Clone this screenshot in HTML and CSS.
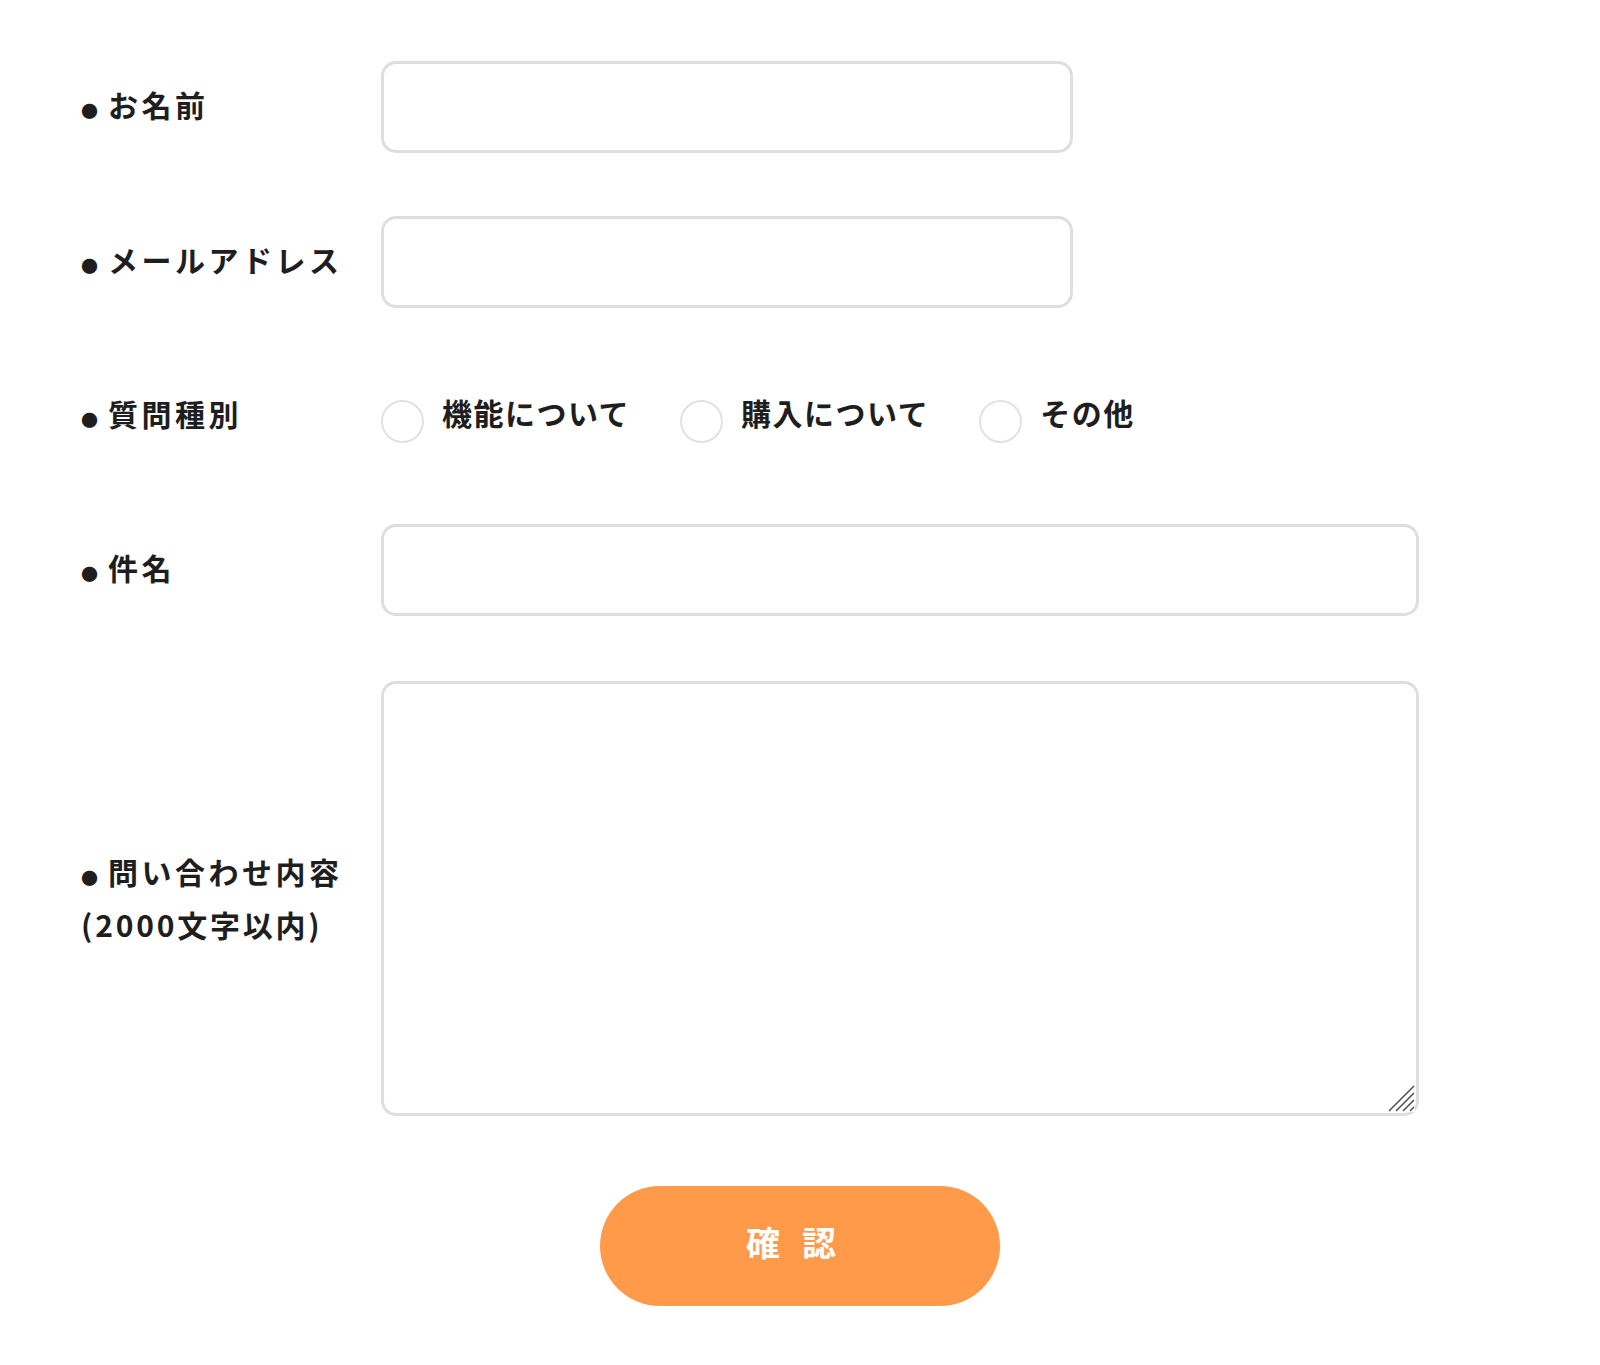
FILE: index.html
```html
<!DOCTYPE html>
<html lang="ja">

<head>
    <meta charset="UTF-8">
    <meta name="viewport" content="width=device-width, initial-scale=1.0">
    <title>お問い合わせ</title>
    <link rel="stylesheet" href="styles.css">
</head>

<body>
    <form class="contact-form">
        <div class="form-grid">
            <label class="form-label" for="name"><span class="mark">●</span>お名前</label>
            <input type="text" id="name" class="form-input short">

            <label class="form-label" for="email"><span class="mark">●</span>メールアドレス</label>
            <input type="email" id="email" class="form-input short">

            <div class="form-label"><span class="mark">●</span>質問種別</div>
            <div class="radio-group">
                <label class="radio-item"><input type="radio" name="kind" value="feature"><span>機能について</span></label>
                <label class="radio-item"><input type="radio" name="kind" value="purchase"><span>購入について</span></label>
                <label class="radio-item"><input type="radio" name="kind" value="other"><span>その他</span></label>
            </div>

            <label class="form-label" for="subject"><span class="mark">●</span>件名</label>
            <input type="text" id="subject" class="form-input">

            <label class="form-label multi" for="message">
                <span class="line"><span class="mark">●</span>問い合わせ内容</span>
                <span class="line note">(2000文字以内)</span>
            </label>
            <div class="textarea-wrap">
                <textarea id="message" class="form-textarea"></textarea>
                <svg class="grip" width="28" height="28" viewBox="0 0 28 28">
                    <path d="M27 2 L2 27 M27 9 L9 27 M27 16 L16 27 M27 23 L23 27" stroke="#555" stroke-width="1.6" fill="none" />
                </svg>
            </div>
        </div>
        <div class="form-submit">
            <button type="button" class="submit-button">確認</button>
        </div>
    </form>
</body>

</html>
```

FILE: styles.css
```css
* {
    margin: 0;
    padding: 0;
    box-sizing: border-box;
}

body {
    font-family: "Noto Sans CJK JP", "Noto Sans", sans-serif;
    background-color: #fff;
    color: #1e1e1e;
}

.contact-form {
    padding: 61px 0 59px;
}

.form-grid {
    display: grid;
    grid-template-columns: 300px 1038px;
    row-gap: 63px;
    padding-left: 81px;
}

.form-label {
    display: flex;
    align-items: center;
    font-size: 30px;
    font-weight: 700;
    letter-spacing: 3.5px;
    line-height: 54px;
    padding-bottom: 6px;
}

.form-label.multi {
    flex-direction: column;
    align-items: flex-start;
    justify-content: center;
    padding-bottom: 0;
}

.form-label .line {
    display: flex;
    align-items: center;
    height: 53px;
}

.form-label .note {
    letter-spacing: 2.8px;
}

.mark {
    font-size: 17px;
    line-height: 1;
    letter-spacing: 0;
    margin-right: 10px;
    margin-top: 12px;
}

.form-input {
    width: 100%;
    height: 92px;
    border: 3px solid #dedede;
    border-radius: 15px;
    font-size: 24px;
    padding: 0 20px;
    outline: none;
}

.form-input.short {
    width: 692px;
}

.radio-group {
    display: flex;
    align-items: center;
    gap: 50px;
    height: 90px;
}

.radio-item {
    display: flex;
    align-items: center;
    gap: 18px;
    font-size: 30px;
    font-weight: 700;
    letter-spacing: 1.5px;
    cursor: pointer;
}

.radio-item span {
    margin-bottom: 8px;
}

.radio-item input {
    appearance: none;
    width: 43px;
    height: 43px;
    margin-top: 10px;
    border: 2px solid #e2e2e2;
    border-radius: 50%;
    cursor: pointer;
}

.textarea-wrap {
    position: relative;
    margin-top: 2px;
}

.form-textarea {
    display: block;
    width: 100%;
    height: 435px;
    border: 3px solid #dedede;
    border-radius: 15px;
    font-family: inherit;
    font-size: 24px;
    padding: 16px 20px;
    outline: none;
    resize: none;
}

.grip {
    position: absolute;
    right: 4px;
    bottom: 4px;
    background-color: #fff;
    pointer-events: none;
}

.form-submit {
    display: flex;
    justify-content: center;
    margin-top: 70px;
}

.submit-button {
    width: 400px;
    height: 120px;
    border: none;
    border-radius: 60px;
    background-color: #ff9a4b;
    color: #fff;
    font-family: inherit;
    font-size: 34px;
    font-weight: 700;
    letter-spacing: 22px;
    padding-bottom: 10px;
    padding-left: 4px;
    cursor: pointer;
}
```
